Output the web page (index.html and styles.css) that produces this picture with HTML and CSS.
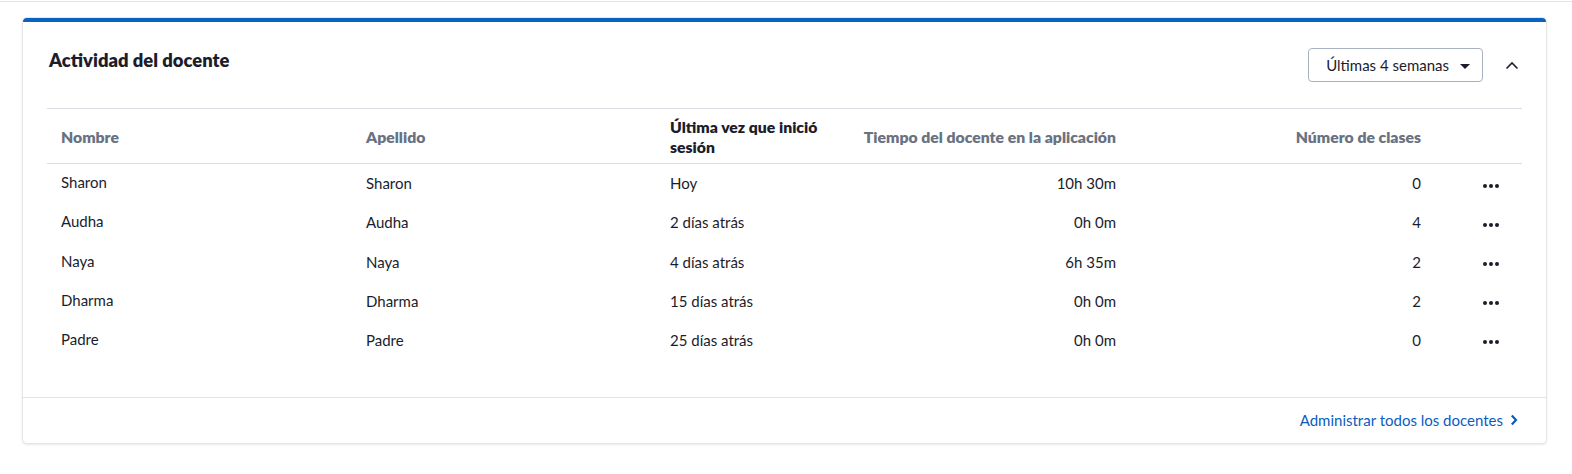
FILE: index.html
```html
<!DOCTYPE html>
<html lang="es">
<head>
<meta charset="utf-8">
<link rel="stylesheet" href="styles.css">
</head>
<body>
<div class="top-rule"></div>
<div class="page">
  <section class="card">
    <header class="card-head">
      <h2 class="title">Actividad del docente</h2>
      <div class="head-actions">
        <button class="select">Últimas 4 semanas <span class="caret"></span></button>
        <button class="collapse" aria-label="Contraer">
          <svg width="14" height="9" viewBox="0 0 14 9"><path d="M1.5 7.5 L7 2 L12.5 7.5" fill="none" stroke="#1e2230" stroke-width="1.6"/></svg>
        </button>
      </div>
    </header>
    <div class="table-wrap">
      <table class="tbl">
        <colgroup>
          <col class="c1"><col class="c2"><col class="c3"><col class="c4"><col class="c5"><col class="c6">
        </colgroup>
        <thead>
          <tr>
            <th>Nombre</th>
            <th>Apellido</th>
            <th class="active">Última vez que inició sesión</th>
            <th class="num">Tiempo del docente en la aplicación</th>
            <th class="num">Número de clases</th>
            <th></th>
          </tr>
        </thead>
        <tbody>
          <tr><td class="first">Sharon</td><td>Sharon</td><td>Hoy</td><td class="num">10h 30m</td><td class="num">0</td><td class="more"><span class="dots"><i></i><i></i><i></i></span></td></tr>
          <tr><td class="first">Audha</td><td>Audha</td><td>2 días atrás</td><td class="num">0h 0m</td><td class="num">4</td><td class="more"><span class="dots"><i></i><i></i><i></i></span></td></tr>
          <tr><td class="first">Naya</td><td>Naya</td><td>4 días atrás</td><td class="num">6h 35m</td><td class="num">2</td><td class="more"><span class="dots"><i></i><i></i><i></i></span></td></tr>
          <tr><td class="first">Dharma</td><td>Dharma</td><td>15 días atrás</td><td class="num">0h 0m</td><td class="num">2</td><td class="more"><span class="dots"><i></i><i></i><i></i></span></td></tr>
          <tr><td class="first">Padre</td><td>Padre</td><td>25 días atrás</td><td class="num">0h 0m</td><td class="num">0</td><td class="more"><span class="dots"><i></i><i></i><i></i></span></td></tr>
        </tbody>
      </table>
    </div>
    <footer class="card-foot">
      <a class="link" href="#">Administrar todos los docentes
        <svg width="8" height="12" viewBox="0 0 8 12"><path d="M1.8 1.5 L6 6 L1.8 10.5" fill="none" stroke="#0b5cc2" stroke-width="2.2"/></svg>
      </a>
    </footer>
  </section>
</div>
</body>
</html>
```

FILE: styles.css
```css
* { box-sizing: border-box; }
html, body { margin: 0; padding: 0; background: #fff; }
body {
  font-family: Lato, "Noto Sans", sans-serif;
  color: #1b1d2b;
  width: 1572px;
  height: 474px;
  overflow: hidden;
}
.top-rule {
  margin-top: 1px;
  height: 1px;
  background: #e4e4e6;
}
.page {
  padding: 16px 26px 0 23px;
}
.card {
  background: #fff;
  border-top: 4px solid #0b63c1;
  border-radius: 4px;
  box-shadow: 0 0 0 1px #e6e6e8, 0 1px 3px rgba(0,0,0,0.18);
  height: 425px;
  display: flex;
  flex-direction: column;
}
.card-head {
  margin: 0 24px;
  padding: 26px 0 26px;
  display: flex;
  justify-content: space-between;
  align-items: flex-start;
  border-bottom: 1px solid #dcdde3;
}
.title {
  margin: 0 0 0 2px;
  font-size: 18.4px;
  line-height: 24px;
  font-weight: 800;
  color: #1b1d2b;
}
.head-actions {
  display: flex;
  align-items: center;
  gap: 21px;
}
.select {
  width: 175px;
  height: 34px;
  border: 1px solid #a9b1bf;
  border-radius: 4px;
  background: #fff;
  font-family: inherit;
  font-size: 15px;
  color: #1b1d2b;
  display: flex;
  align-items: center;
  justify-content: flex-end;
  padding: 0 12px 0 0;
  gap: 11px;
}
.caret {
  width: 0; height: 0;
  border-left: 5px solid transparent;
  border-right: 5px solid transparent;
  border-top: 5px solid #1b1d2b;
  margin-top: 2px;
}
.collapse {
  border: 0;
  background: none;
  padding: 0;
  width: 16px;
  height: 16px;
  display: flex;
  align-items: center;
  justify-content: center;
  margin-right: 2px;
}
.table-wrap {
  margin: 0 24px;
  flex: 1;
}
.tbl {
  width: 100%;
  border-collapse: collapse;
  table-layout: fixed;
  font-size: 15px;
}
.c1 { width: 305px; }
.c2 { width: 304px; }
.c3 { width: 180px; }
.c4 { width: 294px; }
.c5 { width: 305px; }
.c6 { width: auto; }
th {
  text-align: left;
  font-weight: 800;
  font-size: 15.75px;
  color: #697282;
  padding: 8px 14px 6px;
  line-height: 20px;
  border-bottom: 1px solid #dcdde3;
  vertical-align: middle;
}
th.active { color: #1b1d2b; }
td {
  height: 39.25px;
  padding: 0 14px;
  line-height: 20px;
  vertical-align: middle;
  color: #1b1d2b;
}
td.first { padding-bottom: 2px; }
.num { text-align: right; }
td.more { text-align: center; padding: 0 0 0 24px; }
.dots { display: inline-flex; gap: 2px; vertical-align: middle; }
.dots i { width: 4px; height: 4px; border-radius: 50%; background: #1b1d2b; display: block; }
.card-foot {
  border-top: 1px solid #e2e3e6;
  height: 46px;
  display: flex;
  align-items: center;
  justify-content: flex-end;
  padding: 0 28px 2px 0;
}
.link {
  color: #0b5cc2;
  text-decoration: none;
  font-size: 15px;
  display: flex;
  align-items: center;
  gap: 7px;
}
```
